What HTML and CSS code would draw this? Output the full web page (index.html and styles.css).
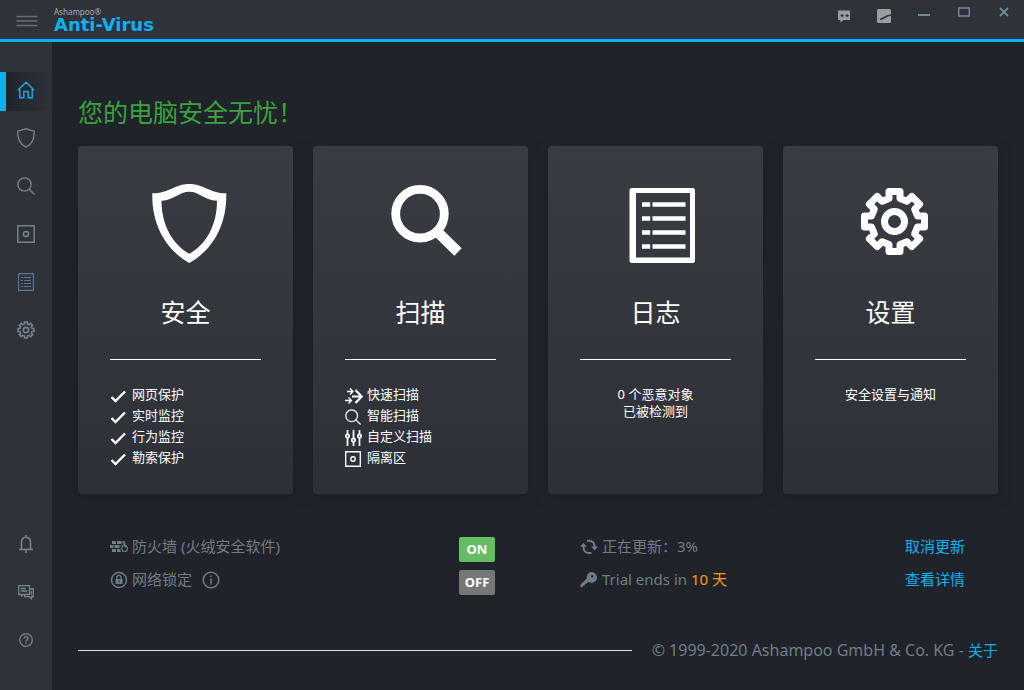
FILE: index.html
```html
<!DOCTYPE html>
<html lang="zh-CN">
<head>
<meta charset="utf-8">
<title>Ashampoo Anti-Virus</title>
<link rel="stylesheet" href="styles.css">
</head>
<body>
<svg class="sprite" aria-hidden="true">
  <symbol id="gear" viewBox="-34 -34 68 68">
    <path d="M-5.5-30H5.5V-23L12.4-20.2 17.3-25.1 25.1-17.3 20.2-12.4 23-5.5H30V5.5H23L20.2 12.4 25.1 17.3 17.3 25.1 12.4 20.2 5.5 23V30H-5.5V23L-12.4 20.2-17.3 25.1-25.1 17.3-20.2 12.4-23 5.5H-30V-5.5H-23L-20.2-12.4-25.1-17.3-17.3-25.1-12.4-20.2-5.5-23Z"/>
    <circle r="10"/>
  </symbol>
  <symbol id="check" viewBox="0 0 18 18"><path d="M1.500 10l4 4L15 4.500" fill="none" stroke="currentColor" stroke-width="2.400"/></symbol>
  <symbol id="lens" viewBox="0 0 18 18"><g fill="none" stroke="currentColor" stroke-width="1.400"><circle cx="7.500" cy="7.500" r="6.600"/><path d="M12 12l5.500 5.500"/></g></symbol>
  <symbol id="vault" viewBox="0 0 18 18"><g fill="none" stroke="currentColor" stroke-width="1.500"><path d="M.8.800h16.400v16.400H.8z"/><circle cx="9" cy="9" r="2.500"/></g></symbol>
</svg>
<div class="app">
  <header class="titlebar">
    <button class="menu" aria-label="菜单"><svg width="22" height="12" viewBox="0 0 22 12"><path d="M.5 1.500h21M.5 6h21M.5 10.500h21" stroke="currentColor" stroke-width="1.400"/></svg></button>
    <div class="brand"><span class="brand-top">Ashampoo®</span><span class="brand-name">Anti-Virus</span></div>
    <div class="controls">
      <button class="tool" aria-label="反馈"><svg width="12" height="13" viewBox="0 0 12 13"><path fill="currentColor" fill-rule="evenodd" d="M0 .5h12v9.500H5.500L2.500 12.500V10H0zM3.500 4v1H2.500v1.200h1v1h1.200v-1h1V5h-1V4zM8.500 4v1h-1v1.200h1v1h1.200v-1h1V5h-1V4z"/></svg></button>
      <button class="tool" aria-label="外观"><svg width="14" height="14" viewBox="0 0 14 14"><rect width="14" height="14" rx="1.500" fill="currentColor"/><path d="M3 10.500C6 9.800 8 7 14 6" fill="none" stroke="#2f3239" stroke-width="1.600"/></svg></button>
      <button class="win" aria-label="最小化"><svg width="12" height="12" viewBox="0 0 12 12"><path d="M0 9h12" stroke="currentColor" stroke-width="2"/></svg></button>
      <button class="win" aria-label="最大化"><svg width="12" height="10" viewBox="0 0 12 10"><path d="M.7 1h10.600v8H.7z" fill="none" stroke="currentColor" stroke-width="1.400"/></svg></button>
      <button class="win" aria-label="关闭"><svg width="10" height="10" viewBox="0 0 10 10"><path d="M1 1l8 8M9 1L1 9" stroke="currentColor" stroke-width="1.800"/></svg></button>
    </div>
  </header>
  <div class="body">
    <nav class="sidebar">
      <button class="side active" aria-label="主页"><svg width="18" height="18" viewBox="0 0 18 18"><path d="M.8 9.200L9 1.300l8.200 7.900M2.800 8v8.700h4V10.500h4.400v6.200h4V8" fill="none" stroke="currentColor" stroke-width="1.500"/></svg></button>
      <button class="side" aria-label="安全"><svg width="18" height="20" viewBox="0 0 18 20"><path d="M.8 3C4.500 3 5.800 1 9 1s4.500 2 8.200 2C17.600 11.500 13.500 17 9 19.200 4.500 17 .4 11.500.8 3z" fill="none" stroke="currentColor" stroke-width="1.300"/></svg></button>
      <button class="side" aria-label="扫描"><svg width="18" height="18"><use href="#lens"/></svg></button>
      <button class="side" aria-label="隔离区"><svg width="18" height="18"><use href="#vault"/></svg></button>
      <button class="side log" aria-label="日志"><svg width="16" height="18" viewBox="0 0 16 18"><path d="M.6.600h14.800v16.800H.6zM3 4.500h2M6 4.500h7M3 7.500h2M6 7.500h7M3 10.500h2M6 10.500h7M3 13.500h2M6 13.500h7" fill="none" stroke="currentColor" stroke-width="1.100"/></svg></button>
      <button class="side" aria-label="设置"><svg class="gear-small" width="18" height="18"><use href="#gear"/></svg></button>
      <button class="side push" aria-label="通知"><svg width="14" height="18" viewBox="0 0 14 18"><path d="M7 0v2M0 14.500h14M2.500 14.500V7.500C2.500 4 4.500 2.200 7 2.200s4.500 1.800 4.500 5.300v7M7 15v3" fill="none" stroke="currentColor" stroke-width="1.600"/></svg></button>
      <button class="side" aria-label="消息"><svg width="16" height="15" viewBox="0 0 16 15"><path d="M.7.700h10.800v8.600H5.500L3.500 11V9.300H.7zM2.800 3.500h5M2.800 6h6.500M11.500 4h3.800v7.500h-1.800v2.300l-2.500-2.300H6.500V9.500M12.500 7h1.500M12.500 9h1.500" fill="none" stroke="currentColor" stroke-width="1.300"/></svg></button>
      <button class="side" aria-label="帮助"><svg width="14" height="14" viewBox="0 0 14 14"><g fill="none" stroke="currentColor" stroke-width="1.200"><circle cx="7" cy="7" r="6.300"/><path d="M5 5.600C5 3.200 9 3.200 9 5.500 9 7 7 6.800 7 8.600M7 9.600v1.300" stroke-width="1.400"/></g></svg></button>
    </nav>
    <main class="main">
      <h1 class="headline">您的电脑安全无忧！</h1>
      <div class="cards">
        <section class="card">
          <svg class="hero" viewBox="0 0 90 90"><path fill="currentColor" fill-rule="evenodd" d="M11.300 15.300C28.500 15.300 33.500 6 48.300 6S68.500 15.300 85.300 15.300C86 51 68.500 74 48.300 85 28.500 74 10.500 51 11.300 15.300zM20.500 22.700C20.500 48 32.500 67 48.300 75.700 64.500 67 76 48 76 22.700 62.500 22 58.500 13.700 48.300 13.700S33.500 22 20.500 22.700z"/></svg>
          <h2 class="card-title">安全</h2>
          <ul class="list">
            <li class="item"><svg class="mark" viewBox="0 0 18 18"><use href="#check"/></svg>网页保护</li>
            <li class="item"><svg class="mark" viewBox="0 0 18 18"><use href="#check"/></svg>实时监控</li>
            <li class="item"><svg class="mark" viewBox="0 0 18 18"><use href="#check"/></svg>行为监控</li>
            <li class="item"><svg class="mark" viewBox="0 0 18 18"><use href="#check"/></svg>勒索保护</li>
          </ul>
        </section>
        <section class="card">
          <svg class="hero" viewBox="0 0 90 90"><g fill="none" stroke="currentColor"><circle cx="44" cy="35.700" r="24.300" stroke-width="8.800"/><path d="M61 53.500l21 20.500" stroke-width="10.500"/></g></svg>
          <h2 class="card-title">扫描</h2>
          <ul class="list">
            <li class="item"><svg class="mark" viewBox="0 0 18 18"><g fill="none" stroke="currentColor"><path d="M7 9.500h9.500M10.500 3l6.300 6.500-6.300 6.500" stroke-width="2.200"/><path d="M2 4.500h6M5 1.500l3 3-3 3M0 13.500h6M3.500 10.500l3 3-3 3" stroke-width="1.300"/></g></svg>快速扫描</li>
            <li class="item"><svg class="mark" viewBox="0 0 18 18"><use href="#lens" width="16" height="16" x="0" y="1"/></svg>智能扫描</li>
            <li class="item"><svg class="mark" viewBox="0 0 18 18"><g fill="none" stroke="currentColor" stroke-width="1.700"><path d="M2.500 1v4M2.500 9v8M8.500 1v8M8.500 13v4M14.500 1v4M14.500 9v8"/><circle cx="2.500" cy="7" r="1.700"/><circle cx="8.500" cy="11" r="1.700"/><circle cx="14.500" cy="7" r="1.700"/></g></svg>自定义扫描</li>
            <li class="item"><svg class="mark" viewBox="0 0 18 18"><use href="#vault" width="16" height="16" x="0" y="1"/></svg>隔离区</li>
          </ul>
        </section>
        <section class="card">
          <svg class="hero" viewBox="0 0 90 90"><path fill="currentColor" fill-rule="evenodd" d="M20 10h62.500l1.500 1.500V83.500L82.500 85H20L18.500 83.500V11.500zM25 15v64.500h54V15z"/><path d="M31 26.500h8.200M41.500 26.500h33M31 40.500h8.200M41.500 40.500h33M31 54.500h8.200M41.500 54.500h33M31 68.500h8.200M41.500 68.500h33" stroke="currentColor" stroke-width="4.600"/></svg>
          <h2 class="card-title">日志</h2>
          <p class="note">0 个恶意对象<br>已被检测到</p>
        </section>
        <section class="card">
          <svg class="hero gear-large" viewBox="0 0 90 90"><use href="#gear" x="14.500" y="9.500" width="68" height="68"/></svg>
          <h2 class="card-title">设置</h2>
          <p class="note">安全设置与通知</p>
        </section>
      </div>
      <div class="status">
        <div class="group">
          <div class="row">
            <svg class="glyph" viewBox="0 0 18 18"><path fill="currentColor" d="M2 3h4v3H2zM7 3h4.500v3H7zM0 7h3.500v3H0zM4.500 7h5v3h-5zM2 11h4v3H2zM7 11h3l1 3H7zM12.500 3H15l-1.500 2.500-1 .5zM10.500 7h1L10.500 9.500z"/><path d="M15 4.500c-.5 2.500-3.200 3.200-3.200 6 0 1.800 1.200 3 2.800 3s2.800-1.300 2.800-3c0-1.400-.8-2.200-1.300-3l-1 1.500c-.6-1.200-.5-3-.1-4.500z" fill="none" stroke="currentColor" stroke-width="1.200"/></svg>
            <span class="label" id="firewall">防火墙 (火绒安全软件)</span>
            <button class="toggle on" role="switch" aria-checked="true" aria-labelledby="firewall">ON</button>
          </div>
          <div class="row">
            <svg class="glyph" viewBox="0 0 18 18"><circle cx="9" cy="9" r="7.500" fill="none" stroke="currentColor" stroke-width="1.500"/><path d="M5.500 8h7v5h-7z" fill="currentColor"/><path d="M6.800 8V6.500a2.200 2.200 0 0 1 4.400 0V8" fill="none" stroke="currentColor" stroke-width="1.300"/><path d="M9 9.500v2" stroke="#20232a"/></svg>
            <span class="label" id="lock">网络锁定</span>
            <button class="info" aria-label="信息"><svg class="glyph" viewBox="0 0 18 18"><circle cx="9" cy="9" r="7.800" fill="none" stroke="currentColor" stroke-width="1.500"/><path d="M9 4.500v1.500M9 7.500v6" stroke="currentColor" stroke-width="1.500"/></svg></button>
            <button class="toggle" role="switch" aria-checked="false" aria-labelledby="lock">OFF</button>
          </div>
        </div>
        <div class="group">
          <div class="row">
            <svg class="glyph" viewBox="0 0 18 18"><path d="M7 2.800h2c3.300 0 5.500 2.200 5.500 5.500V9M11.500 15H9c-3.300 0-5.500-2.200-5.500-5.500V8" fill="none" stroke="currentColor" stroke-width="2"/><path fill="currentColor" d="M11.300 8.500H18L14.700 12.500zM0 8.800h6.800L3.500 5z"/></svg>
            <span class="label">正在更新：3%</span>
            <a class="link" href="#">取消更新</a>
          </div>
          <div class="row">
            <svg class="glyph" viewBox="0 0 18 18"><path fill="currentColor" fill-rule="evenodd" d="M15 2.500a4.800 4.800 0 0 0-8 4.800L.5 13.500v2.800h2l.5-1.500 1.500-.3.500-1.500 1.500-.3 2-2A4.800 4.800 0 0 0 15 2.500zM12.200 4a1.200 1.200 0 1 1 0 2.400 1.200 1.200 0 0 1 0-2.400z"/></svg>
            <span class="label">Trial ends in <span class="days">10 天</span></span>
            <a class="link" href="#">查看详情</a>
          </div>
        </div>
      </div>
      <footer class="footer"><hr class="rule"><p class="legal">© 1999-2020 Ashampoo GmbH &amp; Co. KG - <a class="about" href="#">关于</a></p></footer>
    </main>
  </div>
</div>
</body>
</html>
```

FILE: styles.css
```css
* { box-sizing: border-box; }
body {
  margin: 0;
  background: #20232a;
  color: #fff;
  font-family: "Noto Sans", "Noto Sans CJK SC", sans-serif;
}
h1, h2, p, ul { margin: 0; padding: 0; font-weight: 400; }
button {
  border: 0;
  padding: 0;
  background: none;
  color: inherit;
  font: inherit;
  cursor: pointer;
}
a { text-decoration: none; color: #0cb1f2; }
svg { display: block; flex: none; }
.sprite { position: absolute; width: 0; height: 0; }

.app { min-height: 100vh; display: flex; flex-direction: column; }
.titlebar {
  display: flex;
  align-items: flex-start;
  height: 42px;
  background: #2f3239;
  border-bottom: 3px solid #0cb1f2;
}
.menu { width: 54px; height: 42px; display: grid; place-items: center; color: #63707c; }
.brand { display: flex; flex-direction: column; padding-top: 7px; }
.brand-top { font-size: 8px; line-height: 9px; color: #a9adb2; }
.brand-name { font-family: "DejaVu Sans", sans-serif; font-weight: 700; font-size: 18px; line-height: 18px; color: #0cb1f2; }
.controls { display: flex; margin-left: auto; }
.tool, .win { width: 40px; display: grid; place-items: center; }
.tool { height: 32px; color: #9a9ca0; }
.win { height: 24px; color: #76899b; }

.body { flex: 1; display: flex; }
.sidebar {
  width: 52px;
  flex: none;
  display: flex;
  flex-direction: column;
  gap: 9px;
  padding: 30px 0;
  background: #2f3239;
  color: #748390;
}
.side { height: 39px; padding-bottom: 3px; display: grid; place-items: center; }
.active {
  padding-right: 6px;
  border-left: 6px solid #0cb1f2;
  background: linear-gradient(90deg, #20232a, #2f3239);
  color: #14a9f0;
}
.log { color: #5b7894; }
.push { margin-top: auto; }
.gear-small { fill: none; stroke: currentColor; stroke-width: 6px; }
.gear-large { fill: none; stroke: currentColor; stroke-width: 7px; stroke-linejoin: round; }

.main { flex: 1; padding: 52px 26px 30px; }
.headline { font-size: 25px; line-height: 36px; color: #3aa23f; }
.cards { display: grid; grid-template-columns: repeat(4, 1fr); gap: 20px; margin-top: 16px; }
.card {
  padding: 32px 32px 26px;
  border-radius: 4px;
  background: linear-gradient(#3a3c43, #2e3037);
  box-shadow: 0 4px 12px rgba(28, 30, 32, 0.9);
}
.hero { width: 90px; height: 90px; margin: 0 auto; }
.card-title {
  margin-top: 26px;
  padding-bottom: 29px;
  border-bottom: 1px solid #fff;
  font-size: 25px;
  line-height: 36px;
  text-align: center;
}
.list { margin-top: 24px; list-style: none; font-size: 13px; line-height: 21px; }
.item { display: flex; align-items: center; gap: 4px; }
.mark { width: 18px; height: 18px; margin-top: 3px; }
.note { margin-top: 26px; font-size: 13px; line-height: 17px; text-align: center; }

.status { display: grid; grid-template-columns: 1fr 1fr; gap: 20px; margin-top: 43px; font-size: 15px; line-height: 18px; color: #6f7d89; }
.group { display: flex; flex-direction: column; gap: 8px; padding: 0 33px 0 32px; }
.row { display: flex; align-items: flex-start; gap: 4px; min-height: 25px; }
.glyph { width: 18px; height: 20px; }
.info { margin-left: 6px; }
.toggle {
  width: 36px;
  height: 25px;
  margin-left: auto;
  border-radius: 2px;
  background: #777;
  color: #fff;
  font-size: 13px;
  line-height: 25px;
  font-weight: 700;
}
.on { background: #65bd63; }
.link { margin-left: auto; }
.days { color: #ff9a0a; }
.footer { display: flex; align-items: center; gap: 20px; margin-top: 44px; font-size: 16px; line-height: 22px; color: #6f7d89; }
.about { font-size: 15px; }
.rule { flex: 1; margin: 0; border: 0; border-top: 1px solid #dfe2df; }
```
